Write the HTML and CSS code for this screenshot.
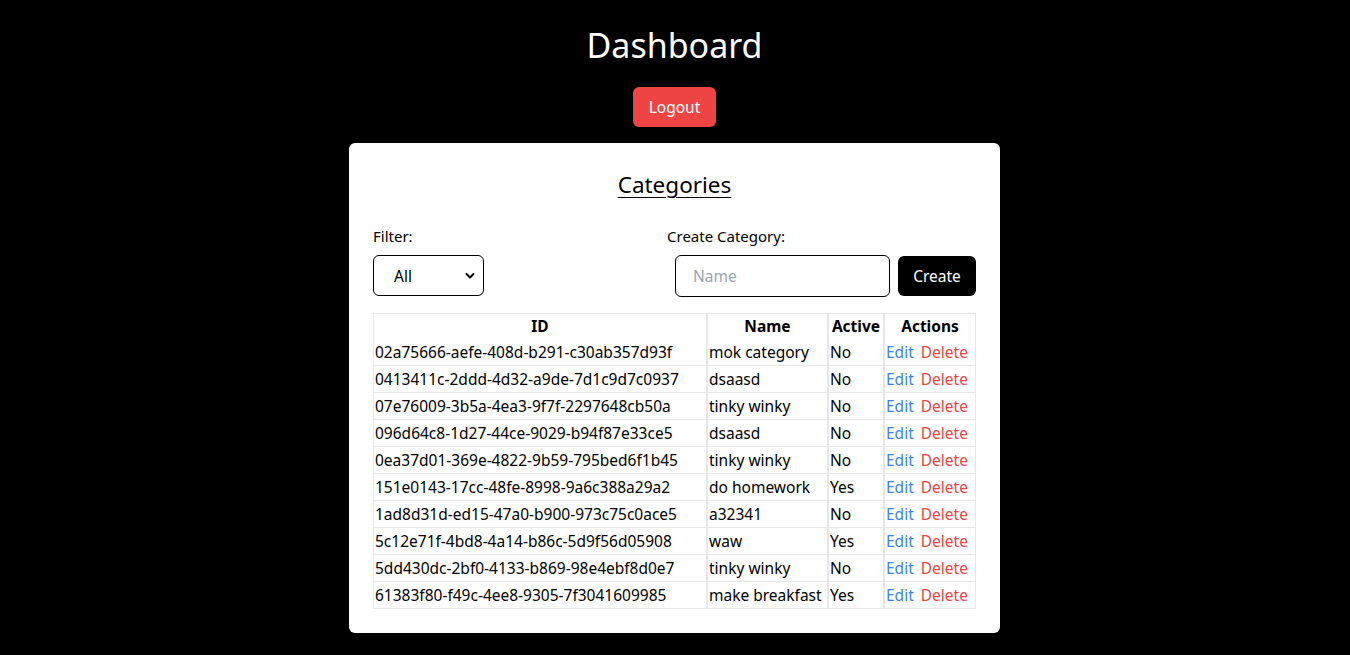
FILE: index.html
```html
<!DOCTYPE html>
<html lang="en">
<head>
<meta charset="utf-8">
<title>Dashboard</title>
<link rel="stylesheet" href="styles.css">
</head>
<body>
<main class="page">
  <h1 class="title">Dashboard</h1>
  <button class="btn btn-logout" type="button">Logout</button>
  <section class="card">
    <h2 class="card-title">Categories</h2>
    <div class="controls">
      <div class="field">
        <label class="label" for="filter">Filter:</label>
        <div class="select-wrap">
          <select id="filter" class="select">
            <option>All</option>
            <option>Active</option>
            <option>Inactive</option>
          </select>
          <svg class="chevron" width="10" height="8" viewBox="0 0 10 8" aria-hidden="true"><path d="M1.5 2 L5 5.5 L8.5 2" fill="none" stroke="#000" stroke-width="2" stroke-linecap="round" stroke-linejoin="round"/></svg>
        </div>
      </div>
      <div class="field field-create">
        <label class="label" for="name">Create Category:</label>
        <div class="create-row">
          <input id="name" class="input" type="text" placeholder="Name">
          <button class="btn btn-create" type="button">Create</button>
        </div>
      </div>
    </div>
    <table class="table">
      <colgroup>
        <col class="c-id"><col class="c-name"><col class="c-active"><col class="c-actions">
      </colgroup>
      <thead>
        <tr><th>ID</th><th>Name</th><th>Active</th><th>Actions</th></tr>
      </thead>
      <tbody>
        <tr><td>02a75666-aefe-408d-b291-c30ab357d93f</td><td>mok category</td><td>No</td><td class="actions"><a class="edit">Edit</a><a class="del">Delete</a></td></tr>
        <tr><td>0413411c-2ddd-4d32-a9de-7d1c9d7c0937</td><td>dsaasd</td><td>No</td><td class="actions"><a class="edit">Edit</a><a class="del">Delete</a></td></tr>
        <tr><td>07e76009-3b5a-4ea3-9f7f-2297648cb50a</td><td>tinky winky</td><td>No</td><td class="actions"><a class="edit">Edit</a><a class="del">Delete</a></td></tr>
        <tr><td>096d64c8-1d27-44ce-9029-b94f87e33ce5</td><td>dsaasd</td><td>No</td><td class="actions"><a class="edit">Edit</a><a class="del">Delete</a></td></tr>
        <tr><td>0ea37d01-369e-4822-9b59-795bed6f1b45</td><td>tinky winky</td><td>No</td><td class="actions"><a class="edit">Edit</a><a class="del">Delete</a></td></tr>
        <tr><td>151e0143-17cc-48fe-8998-9a6c388a29a2</td><td>do homework</td><td>Yes</td><td class="actions"><a class="edit">Edit</a><a class="del">Delete</a></td></tr>
        <tr><td>1ad8d31d-ed15-47a0-b900-973c75c0ace5</td><td>a32341</td><td>No</td><td class="actions"><a class="edit">Edit</a><a class="del">Delete</a></td></tr>
        <tr><td>5c12e71f-4bd8-4a14-b86c-5d9f56d05908</td><td>waw</td><td>Yes</td><td class="actions"><a class="edit">Edit</a><a class="del">Delete</a></td></tr>
        <tr><td>5dd430dc-2bf0-4133-b869-98e4ebf8d0e7</td><td>tinky winky</td><td>No</td><td class="actions"><a class="edit">Edit</a><a class="del">Delete</a></td></tr>
        <tr><td>61383f80-f49c-4ee8-9305-7f3041609985</td><td>make breakfast</td><td>Yes</td><td class="actions"><a class="edit">Edit</a><a class="del">Delete</a></td></tr>
      </tbody>
    </table>
  </section>
</main>
</body>
</html>
```

FILE: styles.css
```css
* { box-sizing: border-box; }

html, body {
  margin: 0;
  background: #000;
}

body {
  font-family: "Noto Sans", "Open Sans", sans-serif;
  font-size: 16px;
  line-height: 24px;
  color: #000;
}

.page {
  display: flex;
  flex-direction: column;
  align-items: center;
  padding-top: 25px;
  padding-right: 1px;
}

.title {
  margin: 0;
  font-size: 34px;
  line-height: 40px;
  font-weight: 400;
  color: #fff;
}

.btn {
  font-family: inherit;
  font-size: 15.5px;
  line-height: 24px;
  border: none;
  border-radius: 6px;
  color: #fff;
  cursor: pointer;
}

.btn-logout {
  margin-top: 22px;
  height: 40px;
  width: 83px;
  background: #ef4444;
  padding: 0;
}

.card {
  margin-top: 16px;
  width: 651px;
  background: #fff;
  border-radius: 6px;
  padding: 25px 24px 24px;
}

.card-title {
  margin: 0;
  text-align: center;
  font-size: 22.5px;
  line-height: 34px;
  font-weight: 400;
  text-decoration: underline;
  text-underline-offset: 4px;
  text-decoration-thickness: 1px;
}

.controls {
  margin-top: 22px;
  display: flex;
  justify-content: space-between;
  align-items: flex-start;
}

.field {
  display: flex;
  flex-direction: column;
}

.label {
  font-size: 15px;
  line-height: 24px;
  margin-bottom: 7px;
}

.select-wrap {
  position: relative;
  width: 111px;
  height: 41px;
}

.select {
  appearance: none;
  -webkit-appearance: none;
  width: 100%;
  height: 100%;
  border: 1px solid #000;
  border-radius: 6px;
  background: #fff;
  font-family: inherit;
  font-size: 15.5px;
  padding: 0 0 0 20px;
  color: #000;
}

.chevron {
  position: absolute;
  right: 9px;
  top: 17px;
  pointer-events: none;
}

.field-create {
  width: 309px;
}

.create-row {
  display: flex;
  gap: 8px;
  padding-left: 8px;
  align-items: center;
}

.input {
  width: 215px;
  height: 42px;
  border: 1px solid #000;
  border-radius: 6px;
  padding: 0 17px;
  font-family: inherit;
  font-size: 15.5px;
  color: #000;
}

.input::placeholder {
  color: #9ca3af;
}

.btn-create {
  width: 78px;
  height: 40px;
  background: #000;
  padding: 0;
}

.table {
  margin-top: 16px;
  width: 603px;
  table-layout: fixed;
  border-collapse: separate;
  border-spacing: 0;
  border-top: 1px solid #e5e7eb;
  border-bottom: 1px solid #e5e7eb;
  font-size: 15.5px;
}

.c-id { width: 334px; }
.c-name { width: 121px; }
.c-active { width: 56px; }
.c-actions { width: 92px; }

.table th,
.table td {
  padding: 1px 1px;
  border-left: 1px solid #e5e7eb;
  border-right: 1px solid #e5e7eb;
  white-space: nowrap;
  overflow: hidden;
  line-height: 24px;
}

.table th {
  font-weight: 700;
  text-align: center;
  line-height: 23px;
}

.table td {
  text-align: left;
}

.table tbody tr + tr td {
  border-top: 1px solid #e5e7eb;
}

.actions a {
  cursor: pointer;
}

.edit {
  color: #3b82f6;
  margin-right: 7px;
}

.del {
  color: #ef4444;
}
```
